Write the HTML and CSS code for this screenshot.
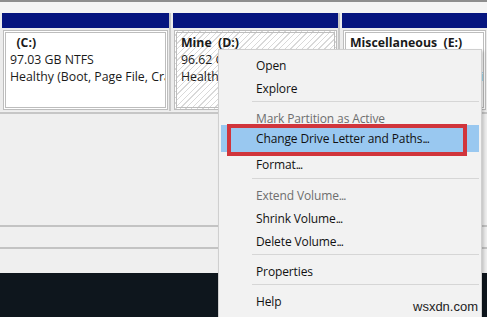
FILE: index.html
```
<!DOCTYPE html>
<html lang="en">
<head>
    <meta charset="UTF-8">
    <title>Disk Management</title>
    <link rel="stylesheet" href="styles.css">
</head>
<body>
    <div class="window">
        <div class="titlebar"></div>
        <div class="strip"></div>

        <div class="disks">
            <div class="part">
                <div class="part-head"></div>
                <div class="part-body">
                    <div class="part-name">&nbsp;&nbsp;(C:)</div>
                    <div>97.03 GB NTFS</div>
                    <div>Healthy (Boot, Page File, Crash Dump, Primary Partition)</div>
                </div>
            </div>
            <div class="part">
                <div class="part-head"></div>
                <div class="part-body hatched">
                    <div class="part-name">Mine&nbsp;&nbsp;(D:)</div>
                    <div>96.62 GB NTFS</div>
                    <div>Healthy (Primary Partition)</div>
                </div>
            </div>
            <div class="part">
                <div class="part-head"></div>
                <div class="part-body">
                    <div class="part-name">Miscellaneous&nbsp;&nbsp;(E:)</div>
                    <div>100.00 GB NTFS</div>
                    <div>Healthy (Primary Partition)</div>
                </div>
            </div>
        </div>

        <div class="pane"></div>
        <div class="status"></div>
        <div class="status tall"></div>
        <div class="taskbar"></div>
    </div>

    <!-- right-click menu on the D: partition -->
    <div class="menu">
        <div class="menu-item">Open</div>
        <div class="menu-item">Explore</div>
        <div class="menu-sep"></div>
        <div class="menu-item disabled short">Mark Partition as Active</div>
        <div class="menu-item active">Change Drive Letter and Paths<span class="dots">...</span></div>
        <div class="menu-item roomy">Format<span class="dots">...</span></div>
        <div class="menu-sep"></div>
        <div class="menu-item disabled">Extend Volume<span class="dots">...</span></div>
        <div class="menu-item">Shrink Volume<span class="dots">...</span></div>
        <div class="menu-item">Delete Volume<span class="dots">...</span></div>
        <div class="menu-sep"></div>
        <div class="menu-item">Properties</div>
        <div class="menu-sep"></div>
        <div class="menu-item">Help</div>
    </div>

    <div class="watermark">wsxdn.com</div>
</body>
</html>
```

FILE: styles.css
```
body {
    margin: 0;
    font-family: 'Open Sans', 'Noto Sans', sans-serif;
    font-size: 12px;
    color: #111;
    background-color: #efefef;
    overflow: hidden;
}

.window {
    width: 487px;
    height: 317px;
    display: flex;
    flex-direction: column;
    overflow: hidden;
}

.titlebar {
    height: 2px;
    background-color: #8e8e8e;
}

.strip {
    height: 11px;
    background-color: #f4f4f4;
}

.disks {
    display: grid;
    grid-template-columns: 169px 167px minmax(0, 1fr);
    gap: 2px;
    height: 98px;
    background-color: #c7c7c7;
}

.part {
    display: flex;
    flex-direction: column;
    min-width: 0;
    background-color: #ececec;
}

.part-head {
    height: 15px;
    margin-left: 2px;
    background-color: #06157f;
}

.part-body {
    flex: 1;
    margin: 2px 1px 1px 3px;
    padding: 1px 4px 0;
    border: 3px double #bdbdbd;
    background-color: #fff;
    font-size: 12.3px;
    line-height: 17px;
    color: #1a1a1a;
    white-space: nowrap;
    overflow: hidden;
}

.part-name {
    font-weight: 700;
}

.hatched {
    background-color: #fff;
    background-image: repeating-linear-gradient(135deg, #fff 0, #fff 3px, #d9d9d9 3px, #d9d9d9 4px);
}

.pane {
    margin-top: 1px;
    height: 111px;
    border-top: 2px solid #c6c6c6;
}

.status {
    height: 20px;
    border-top: 2px solid #c3c3c3;
}

.status.tall {
    height: 24px;
}

.taskbar {
    flex: 1;
    background-color: #0e161d;
}

.menu {
    position: absolute;
    left: 218px;
    top: 49px;
    width: 258px;
    height: 268px;
    padding: 4px 2px 0;
    background-color: #f2f2f2;
    border: 1px solid #cfcfcf;
    border-bottom: none;
    box-shadow: 2px 2px 3px rgba(0, 0, 0, 0.18);
}

.menu-item {
    position: relative;
    height: 23px;
    line-height: 23px;
    padding-left: 35px;
    color: #111;
    letter-spacing: -0.12px;
    white-space: nowrap;
}

.dots {
    letter-spacing: -1px;
}

.menu-item.disabled {
    color: #6e6e6e;
}

.menu-item.short {
    height: 18px;
}

.menu-item.roomy {
    height: 25px;
    line-height: 25px;
}

.menu-item.active {
    height: 27px;
    line-height: 27px;
    background-color: #99c8f0;
}

/* red annotation box around the highlighted entry */
.menu-item.active::after {
    content: "";
    position: absolute;
    left: 6px;
    top: -1px;
    width: 232px;
    height: 24px;
    border: 4px solid #d1353c;
}

.menu-sep {
    height: 1px;
    margin: 1px 0 5px 31px;
    background-color: #d6d6d6;
}

.watermark {
    position: absolute;
    left: 413px;
    top: 299px;
    font-family: 'Liberation Sans', sans-serif;
    font-size: 13px;
    color: #222;
}
```
